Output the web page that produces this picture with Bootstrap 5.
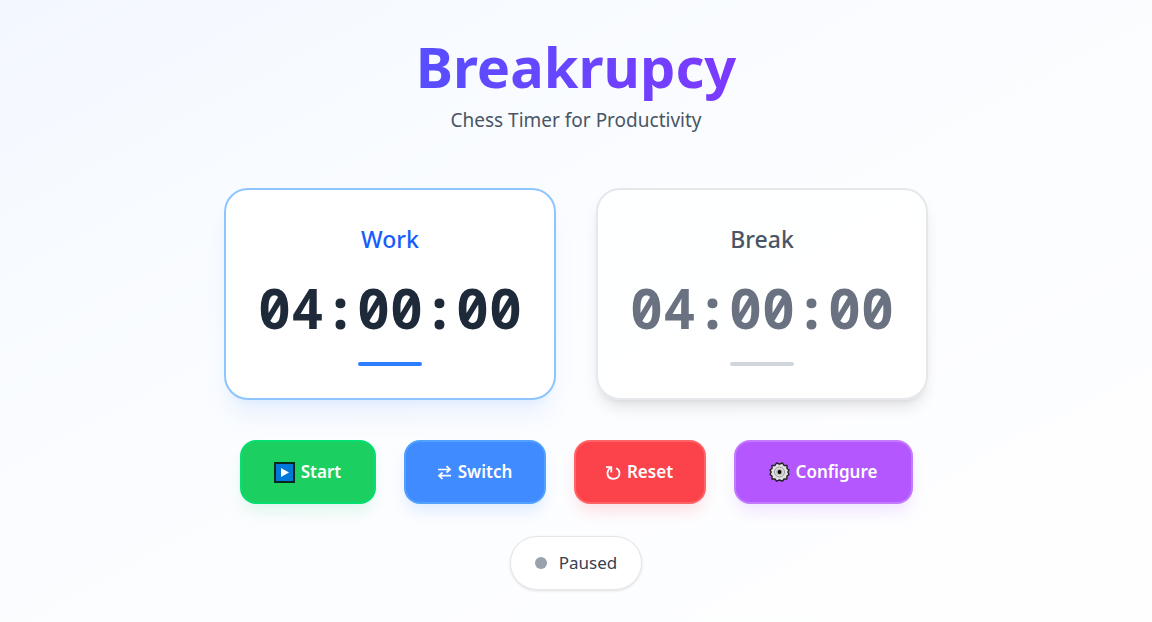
<!DOCTYPE html>
<html lang="en">
<head>
<meta charset="utf-8">
<meta name="viewport" content="width=device-width, initial-scale=1">
<title>Breakrupcy</title>
<link href="https://cdn.jsdelivr.net/npm/bootstrap@5.3.0/dist/css/bootstrap.min.css" rel="stylesheet">
<style>
body{font-family:"Noto Sans","Open Sans",sans-serif;background:linear-gradient(to bottom right,#f3f7ff,#f8fbff 25%,#fcfdff 60%,#fefefe);min-height:100vh}
.page-head{padding-top:12px}
.brand-title{font-size:56px;line-height:60px;font-weight:700;padding:0 2px 10px;margin-bottom:0;background:linear-gradient(to right,#574fff,#7c3aff);-webkit-background-clip:text;background-clip:text;color:transparent}
.tagline{font-size:19px;line-height:28px;color:#4a5565}
.clocks{gap:40px;margin-top:54px}
.clock{width:332px;border:2px solid #e5e7eb;border-radius:24px;padding:32px 0;background:rgba(255,255,255,.8);box-shadow:0 10px 15px -3px rgba(0,0,0,.1),0 4px 6px -4px rgba(0,0,0,.1);color:#6a7282}
.clock h2{font-size:23px;line-height:34px;font-weight:500;color:#4a5565;margin-bottom:22px}
.clock time{font-family:"Noto Sans Mono","DejaVu Sans Mono",monospace;font-size:55px;line-height:60px;font-weight:700}
.clock .meter-bar{width:64px;height:4px;border-radius:4px;background:#d1d5dc;margin-top:24px}
.clock.active{background:#fff;border-color:#8ec5ff;color:#1e2939;box-shadow:0 20px 25px -5px rgba(43,127,255,.08),0 8px 10px -6px rgba(43,127,255,.08)}
.clock.active h2{color:#155dfc}
.clock.active .meter-bar{background:#2b7fff}
.actions{gap:28px;margin-top:40px}
.actions .btn{height:64px;padding:0;font-size:17px;line-height:28px;font-weight:600;color:#fff;border-width:2px;border-radius:16px;gap:6px}
.btn-start{width:136px;background:#1bcf60;border-color:#05df72;box-shadow:0 10px 15px -3px rgba(0,201,80,.12)}
.btn-switch{width:142px;background:#408bff;border-color:#51a2ff;box-shadow:0 10px 15px -3px rgba(43,127,255,.14)}
.btn-reset{width:132px;background:#fc434b;border-color:#ff6467;box-shadow:0 10px 15px -3px rgba(251,44,54,.14)}
.btn-config{width:179px;background:#b457ff;border-color:#c27aff;box-shadow:0 10px 15px -3px rgba(173,70,255,.14)}
.state-pill{margin-top:32px;padding:12px 24px;border:1px solid #e5e7eb;border-radius:27px;background:#fff;box-shadow:0 1px 3px rgba(0,0,0,.12);font-size:17px;line-height:28px;color:#364153;gap:12px}
.state-dot{width:12px;height:12px;background:#99a1af}
</style>
</head>
<body>
<main class="container d-flex flex-column align-items-center pt-4 pb-4">
<header class="page-head text-center">
<h1 class="brand-title d-inline-block">Breakrupcy</h1>
<p class="tagline mb-0">Chess Timer for Productivity</p>
</header>
<div class="clocks d-flex flex-wrap justify-content-center">
<section class="clock active d-flex flex-column align-items-center"><h2>Work</h2><time>04:00:00</time><div class="meter-bar"></div></section>
<section class="clock d-flex flex-column align-items-center"><h2>Break</h2><time>04:00:00</time><div class="meter-bar"></div></section>
</div>
<div class="actions d-flex flex-wrap justify-content-center">
<button type="button" class="btn btn-start d-flex align-items-center justify-content-center">
<svg width="21" height="21" viewBox="0 0 21 21" aria-hidden="true"><path fill="#07291a" d="M0 0h21v21H0z"/><path fill="#0078d7" d="M2 2h17v17H2z"/><path fill="#fff" d="M7 6v9l8-4.500z"/></svg>Start</button>
<button type="button" class="btn btn-switch d-flex align-items-center justify-content-center">
<svg width="15" height="15" viewBox="0 0 15 15" fill="none" stroke="#fff" stroke-width="1.700" aria-hidden="true"><path d="M1 4.500h12M9.500 1.200 13 4.500 9.500 7.500M14 10.700H2M5.500 7.500 2 10.700 5.500 14"/></svg>Switch</button>
<button type="button" class="btn btn-reset d-flex align-items-center justify-content-center">
<svg width="15" height="15" viewBox="0 0 15 15" fill="none" stroke="#fff" stroke-width="1.800" aria-hidden="true"><path d="M0 2.200h5.300v5.300M5 2.500C2.500 4 1.200 6 1.500 9c.5 3 3 4.800 6 4.800 3.500 0 6-2.300 6-5.500 0-2.200-1.200-4-3.300-5"/></svg>Reset</button>
<button type="button" class="btn btn-config d-flex align-items-center justify-content-center">
<svg width="21" height="20" viewBox="0 0 21 20" aria-hidden="true"><g stroke="#222" stroke-width="1.400" fill="#e2e2e2"><path stroke-linejoin="round" d="M7.500 1 10.500 2.200 13.500 1 15 3.500 18 3.500 18 6.500 20 8 18.800 10 20 12.500 18 14 17.800 17 15 17 13.500 19.200 10.500 18 7.500 19.200 6 17 3 17 3 14 1 12.500 2.200 10 1 8 3 6.500 3 3.500 6 3.500z"/><circle cx="10.500" cy="10" r="5" stroke="#999" stroke-width="1"/></g><circle cx="10.500" cy="10" r="3.300" fill="#bbb"/><circle cx="10.500" cy="10" r="1.900" fill="#050505"/></svg>Configure</button>
</div>
<div class="state-pill d-inline-flex align-items-center" role="status"><span class="state-dot rounded-circle"></span>Paused</div>
</main>
<script src="https://cdn.jsdelivr.net/npm/bootstrap@5.3.0/dist/js/bootstrap.bundle.min.js"></script>
</body>
</html>
